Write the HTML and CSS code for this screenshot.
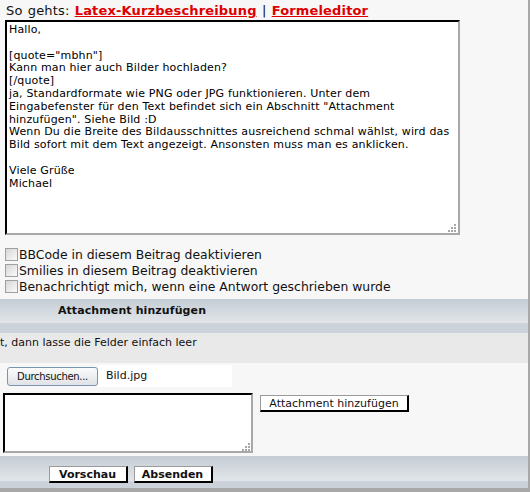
FILE: index.html
```html
<!DOCTYPE html>
<html lang="de">
<head>
    <meta charset="UTF-8">
    <meta name="viewport" content="width=device-width, initial-scale=1.0">
    <title>Antwort schreiben</title>
    <link rel="stylesheet" href="styles.css">
</head>
<body>
    <div class="page">
        <div class="howto">So gehts: <a href="#">Latex-Kurzbeschreibung</a> | <a href="#">Formeleditor</a></div>

        <div class="msg-box">
            <textarea class="message" name="message">Hallo,

[quote="mbhn"]
Kann man hier auch Bilder hochladen?
[/quote]
ja, Standardformate wie PNG oder JPG funktionieren. Unter dem
Eingabefenster für den Text befindet sich ein Abschnitt "Attachment
hinzufügen". Siehe Bild :D
Wenn Du die Breite des Bildausschnittes ausreichend schmal wählst, wird das
Bild sofort mit dem Text angezeigt. Ansonsten muss man es anklicken.

Viele Grüße
Michael</textarea>
            <svg class="grip" width="8" height="8" viewBox="0 0 8 8">
                <rect x="6" y="0" width="2" height="2" fill="#a8a8a8"/>
                <rect x="3" y="3" width="2" height="2" fill="#a8a8a8"/>
                <rect x="6" y="3" width="2" height="2" fill="#a8a8a8"/>
                <rect x="0" y="6" width="2" height="2" fill="#a8a8a8"/>
                <rect x="3" y="6" width="2" height="2" fill="#a8a8a8"/>
                <rect x="6" y="6" width="2" height="2" fill="#a8a8a8"/>
            </svg>
        </div>

        <div class="options">
            <label class="opt"><input type="checkbox" name="disable_bbcode">BBCode in diesem Beitrag deaktivieren</label>
            <label class="opt"><input type="checkbox" name="disable_smilies">Smilies in diesem Beitrag deaktivieren</label>
            <label class="opt"><input type="checkbox" name="notify">Benachrichtigt mich, wenn eine Antwort geschrieben wurde</label>
        </div>

        <div class="attach-head">
            <div class="head-title">Attachment hinzufügen</div>
        </div>
        <div class="head-band"></div>
        <div class="note">t, dann lasse die Felder einfach leer</div>

        <div class="file-row">
            <button class="browse-btn">Durchsuchen...</button>
            <span class="file-name">Bild.jpg</span>
        </div>

        <div class="attach-row">
            <div class="comment-box">
                <textarea class="comment" name="filecomment"></textarea>
                <svg class="grip small" width="8" height="8" viewBox="0 0 8 8">
                    <rect x="6" y="0" width="2" height="2" fill="#a8a8a8"/>
                    <rect x="3" y="3" width="2" height="2" fill="#a8a8a8"/>
                    <rect x="6" y="3" width="2" height="2" fill="#a8a8a8"/>
                    <rect x="0" y="6" width="2" height="2" fill="#a8a8a8"/>
                    <rect x="3" y="6" width="2" height="2" fill="#a8a8a8"/>
                    <rect x="6" y="6" width="2" height="2" fill="#a8a8a8"/>
                </svg>
            </div>
            <button class="plain-btn add-btn">Attachment hinzufügen</button>
        </div>

        <div class="footer">
            <div class="footer-cell">
                <button class="plain-btn bold-btn">Vorschau</button>
                <button class="plain-btn bold-btn">Absenden</button>
            </div>
        </div>
    </div>
</body>
</html>
```

FILE: styles.css
```css
body {
    margin: 0;
    font-family: "DejaVu Sans", Verdana, sans-serif;
    color: #111;
    background-color: #f7f7f7;
}
.page {
    width: 528px;
    height: 492px;
    border-right: 2px solid #a8a8a8;
    background-color: #f7f7f7;
    overflow: hidden;
}
.howto {
    box-sizing: border-box;
    height: 20px;
    padding: 3px 0 0 6px;
    font-size: 13px;
    line-height: 15px;
    letter-spacing: 0.15px;
    word-spacing: 1px;
}
.howto a {
    color: #dd0000;
    font-weight: bold;
}
.msg-box {
    position: relative;
    width: 455px;
    height: 215px;
    margin-left: 5px;
}
.message, .comment {
    display: block;
    box-sizing: border-box;
    width: 100%;
    height: 100%;
    margin: 0;
    padding: 2px;
    border: 2px solid;
    border-color: #000 #a8a8a8 #a8a8a8 #000;
    background-color: #fff;
    color: #000;
    font-family: "DejaVu Sans", Verdana, sans-serif;
    font-size: 11px;
    line-height: 12.8px;
    letter-spacing: 0.15px;
    resize: none;
    overflow: hidden;
    outline: none;
}
.grip {
    position: absolute;
    right: 4px;
    bottom: 3px;
}
.grip.small {
    right: 3px;
    bottom: 2px;
}
.options {
    padding-top: 11px;
    margin-bottom: 5px;
}
.opt {
    display: flex;
    align-items: center;
    height: 16px;
    font-size: 12.4px;
}
.opt input {
    appearance: none;
    box-sizing: border-box;
    width: 13px;
    height: 13px;
    margin: 0 1px 0 5px;
    border: 1px solid #a0a0a0;
    background: linear-gradient(135deg, #d6d6d6, #fbfbfb);
}
.attach-head {
    display: flex;
    height: 24px;
    background: linear-gradient(to bottom, #c4ccd4, #e2e6ea);
}
.head-title {
    width: 264px;
    text-align: center;
    font-size: 11px;
    font-weight: bold;
    line-height: 24px;
    letter-spacing: 0.1px;
}
.head-band {
    height: 10px;
    background-color: #cbd2d9;
}
.note {
    box-sizing: border-box;
    height: 30px;
    padding-top: 3px;
    background-color: #e9e9e9;
    font-size: 11px;
    line-height: 13px;
}
.file-row {
    display: flex;
    align-items: center;
    height: 22px;
    padding: 2px 0 0 7px;
}
.browse-btn {
    box-sizing: border-box;
    width: 91px;
    height: 19px;
    padding: 0;
    border: 1px solid #7896b0;
    border-radius: 3px;
    background: linear-gradient(to bottom, #fbfbfb, #dfe2e6);
    color: #111;
    font-family: "DejaVu Sans", Verdana, sans-serif;
    font-size: 10px;
    letter-spacing: -0.3px;
}
.file-name {
    box-sizing: border-box;
    width: 134px;
    height: 22px;
    padding-left: 8px;
    background-color: #fff;
    font-size: 11px;
    line-height: 22px;
}
.attach-row {
    display: flex;
    align-items: flex-start;
    margin-top: 6px;
    padding-left: 3px;
}
.comment-box {
    position: relative;
    width: 250px;
    height: 60px;
}
.plain-btn {
    box-sizing: border-box;
    height: 17px;
    padding: 0 6px;
    border-style: solid;
    border-width: 1px 2px 2px 1px;
    border-color: #9a9a9a #000 #000 #9a9a9a;
    background-color: #fff;
    color: #111;
    font-family: "DejaVu Sans", Verdana, sans-serif;
    font-size: 11px;
    line-height: 13px;
}
.add-btn {
    width: 149px;
    margin: 2px 0 0 7px;
}
.footer {
    box-sizing: border-box;
    height: 36px;
    margin-top: 3px;
    border-bottom: 4px solid #a8a8a8;
    background: linear-gradient(to bottom, #c4ccd4 0, #e2e6ea 25px, #cbd2d9 25px);
}
.footer-cell {
    display: flex;
    justify-content: center;
    gap: 6px;
    width: 261px;
    padding-top: 10px;
}
.bold-btn {
    width: 79px;
    font-weight: bold;
}
```
